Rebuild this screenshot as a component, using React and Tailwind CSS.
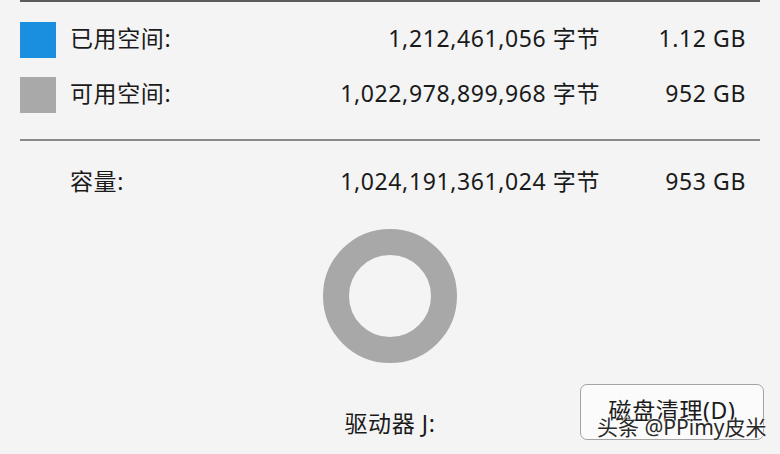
/* eslint-disable */
import React from 'react';

const font = { fontFamily: '"Segoe UI", "Noto Sans", "Noto Sans CJK SC", sans-serif' };

const rows = [
  { color: 'bg-[#1b8fdf]', label: '已用空间:', bytes: '1,212,461,056 字节', size: '1.12 GB' },
  { color: 'bg-[#a9a9a9]', label: '可用空间:', bytes: '1,022,978,899,968 字节', size: '952 GB' },
];

const App = () => {
  return (
    <div
      className="relative w-[780px] h-[454px] overflow-hidden bg-[#f4f4f4] text-[#1a1a1a] text-[23px] leading-none tracking-[0.6px]"
      style={font}
    >
      {/* top divider (end of previous section) */}
      <div className="mx-[20px] h-[2px] bg-[#5c5c5c]" />

      <div className="flex flex-col gap-[19px] pt-[20px] pl-[20px] pr-[34px]">
        {rows.map((r) => (
          <div key={r.label} className="flex items-center h-[36px]">
            <div className={`w-[36px] h-[36px] ${r.color}`} />
            <span className="ml-[14px] -mt-[3px]">{r.label}</span>
            <span className="flex-1 text-right -mt-[3px]">{r.bytes}</span>
            <span className="w-[146px] text-right -mt-[3px]">{r.size}</span>
          </div>
        ))}
      </div>

      <div className="mx-[20px] mt-[26px] h-[2px] bg-[#8a8a8a]" />

      <div className="flex items-center h-[36px] mt-[22px] pl-[20px] pr-[34px]">
        <span className="ml-[50px]">容量:</span>
        <span className="flex-1 text-right">1,024,191,361,024 字节</span>
        <span className="w-[146px] text-right">953 GB</span>
      </div>

      {/* usage donut */}
      <div className="flex justify-center mt-[30px]">
        <div className="w-[134px] h-[134px] rounded-full border-[26px] border-[#a8a8a8]" />
      </div>

      <div className="grid grid-cols-[1fr_auto_1fr] items-center px-[16px] mt-[21px]">
        <div />
        <span className="mt-[23px]">驱动器 J:</span>
        <div className="flex justify-end">
          <button className="w-[184px] h-[56px] rounded-[7px] border border-[#a3a3a3] bg-[#fbfbfb] text-[23px] text-[#1a1a1a] pb-[3px]">
            磁盘清理(D)
          </button>
        </div>
      </div>

      {/* watermark */}
      <div
        className="absolute left-[597px] top-[417px] text-[21px] tracking-normal text-[#2a2a2a]"
        style={{ textShadow: '0 0 2px #fff, 0 0 2px #fff, 0 0 2px #fff' }}
      >
        头条 @PPimy皮米
      </div>
    </div>
  );
};

export default App;
